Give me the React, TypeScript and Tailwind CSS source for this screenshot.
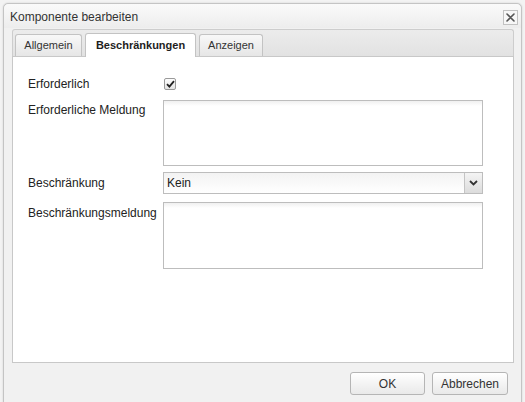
import React from "react";

const font = { fontFamily: '"Liberation Sans", Arial, sans-serif' };

function Tab({ label, active, w }: { label: string; active?: boolean; w: string }) {
  return (
    <div
      className={
        active
          ? `${w} h-[24px] flex items-center justify-center rounded-t-[3px] border border-b-0 border-[#c3c3c3] bg-white text-[11px] font-bold text-[#1e1e1e] -mb-px relative z-10`
          : `${w} h-[22px] mt-[2px] flex items-center justify-center rounded-t-[3px] border border-b-0 border-[#c3c3c3] bg-gradient-to-b from-[#f8f8f8] to-[#e6e6e6] text-[11px] text-[#333]`
      }
    >
      {label}
    </div>
  );
}

function Textarea({ h }: { h: string }) {
  return (
    <div className={`w-[320px] ${h} border border-[#bdbdbd] bg-white bg-gradient-to-b from-[#f0f0f0] to-white bg-no-repeat bg-[length:100%_5px]`} />
  );
}

export default function App() {
  return (
    <div className="w-[525px] h-[402px] bg-[#f3f3f3] overflow-hidden pl-[3px] pt-[3px]" style={font}>
      <div className="w-[519px] h-[410px] rounded-t-[5px] border border-[#c4c4c4] bg-[#f1f1f1] shadow-[0_0_2px_rgba(0,0,0,0.15)] flex flex-col">
        {/* title bar */}
        <div className="h-[24px] flex items-center justify-between pl-[6px] pr-[3px] rounded-t-[5px] bg-gradient-to-b from-[#fafafa] to-[#ededed]">
          <span className="text-[12px] text-[#333] mt-[1px]">Komponente bearbeiten</span>
          <div className="w-[15px] h-[15px] border border-[#c2c2c2] bg-[#f7f7f7] flex items-center justify-center mt-[2px]">
            <svg width="9" height="9" viewBox="0 0 9 9">
              <path d="M1 1 L8 8 M8 1 L1 8" stroke="#555" strokeWidth="1.6" strokeLinecap="round" />
            </svg>
          </div>
        </div>

        {/* body */}
        <div className="px-[8px] pt-[1px]">
          {/* tab strip */}
          <div className="w-[502px] h-[27px] border border-[#cdcdcd] rounded-t-[3px] bg-gradient-to-b from-[#ececec] to-[#e2e2e2] flex items-end gap-[3px] pl-[2px] border-b-0">
            <Tab label="Allgemein" w="w-[67px]" />
            <Tab label="Beschränkungen" w="w-[111px]" active />
            <Tab label="Anzeigen" w="w-[64px]" />
          </div>
          {/* panel */}
          <div className="w-[502px] h-[307px] border border-[#c8c8c8] bg-white pl-[15px] pt-[20px]">
            <div className="grid grid-cols-[135px_320px] text-[12px] text-[#222] leading-[14px]">
              <div className="h-[13px] flex items-center">Erforderlich</div>
              <div className="h-[13px] flex items-center">
                <div className="ml-[1px] w-[12px] h-[12px] border border-[#9a9a9a] rounded-[2px] bg-gradient-to-b from-[#fdfdfd] to-[#e4e4e4] flex items-center justify-center">
                  <svg width="9" height="8" viewBox="0 0 9 8">
                    <path d="M1 4.2 L3.4 6.6 L8 1.2" stroke="#222" strokeWidth="1.8" fill="none" />
                  </svg>
                </div>
              </div>

              <div className="mt-[10px] pt-[3px]">Erforderliche Meldung</div>
              <div className="mt-[10px]">
                <Textarea h="h-[66px]" />
              </div>

              <div className="mt-[6px] h-[22px] flex items-center">Beschränkung</div>
              <div className="mt-[6px]">
                <div className="w-[320px] h-[22px] border border-[#bdbdbd] bg-gradient-to-b from-[#f3f3f3] to-white flex items-center justify-between">
                  <span className="pl-[3px] text-[12px] text-[#222]">Kein</span>
                  <div className="w-[18px] h-full border-l border-[#c4c4c4] bg-gradient-to-b from-[#f4f4f4] to-[#dcdcdc] flex items-center justify-center">
                    <svg width="9" height="6" viewBox="0 0 9 6">
                      <path d="M1 1 L4.5 4.5 L8 1" stroke="#333" strokeWidth="1.8" fill="none" />
                    </svg>
                  </div>
                </div>
              </div>

              <div className="mt-[8px] pt-[4px]">Beschränkungsmeldung</div>
              <div className="mt-[8px]">
                <Textarea h="h-[67px]" />
              </div>
            </div>
          </div>
        </div>

        {/* footer */}
        <div className="flex justify-end gap-[7px] pr-[13px] pt-[9px]">
          <button className="w-[75px] h-[23px] rounded-[3px] border border-[#b5b5b5] bg-gradient-to-b from-white to-[#e9e9e9] text-[12px] text-[#333]">
            OK
          </button>
          <button className="w-[76px] h-[23px] rounded-[3px] border border-[#b5b5b5] bg-gradient-to-b from-white to-[#e9e9e9] text-[12px] text-[#333]">
            Abbrechen
          </button>
        </div>
      </div>
    </div>
  );
}
